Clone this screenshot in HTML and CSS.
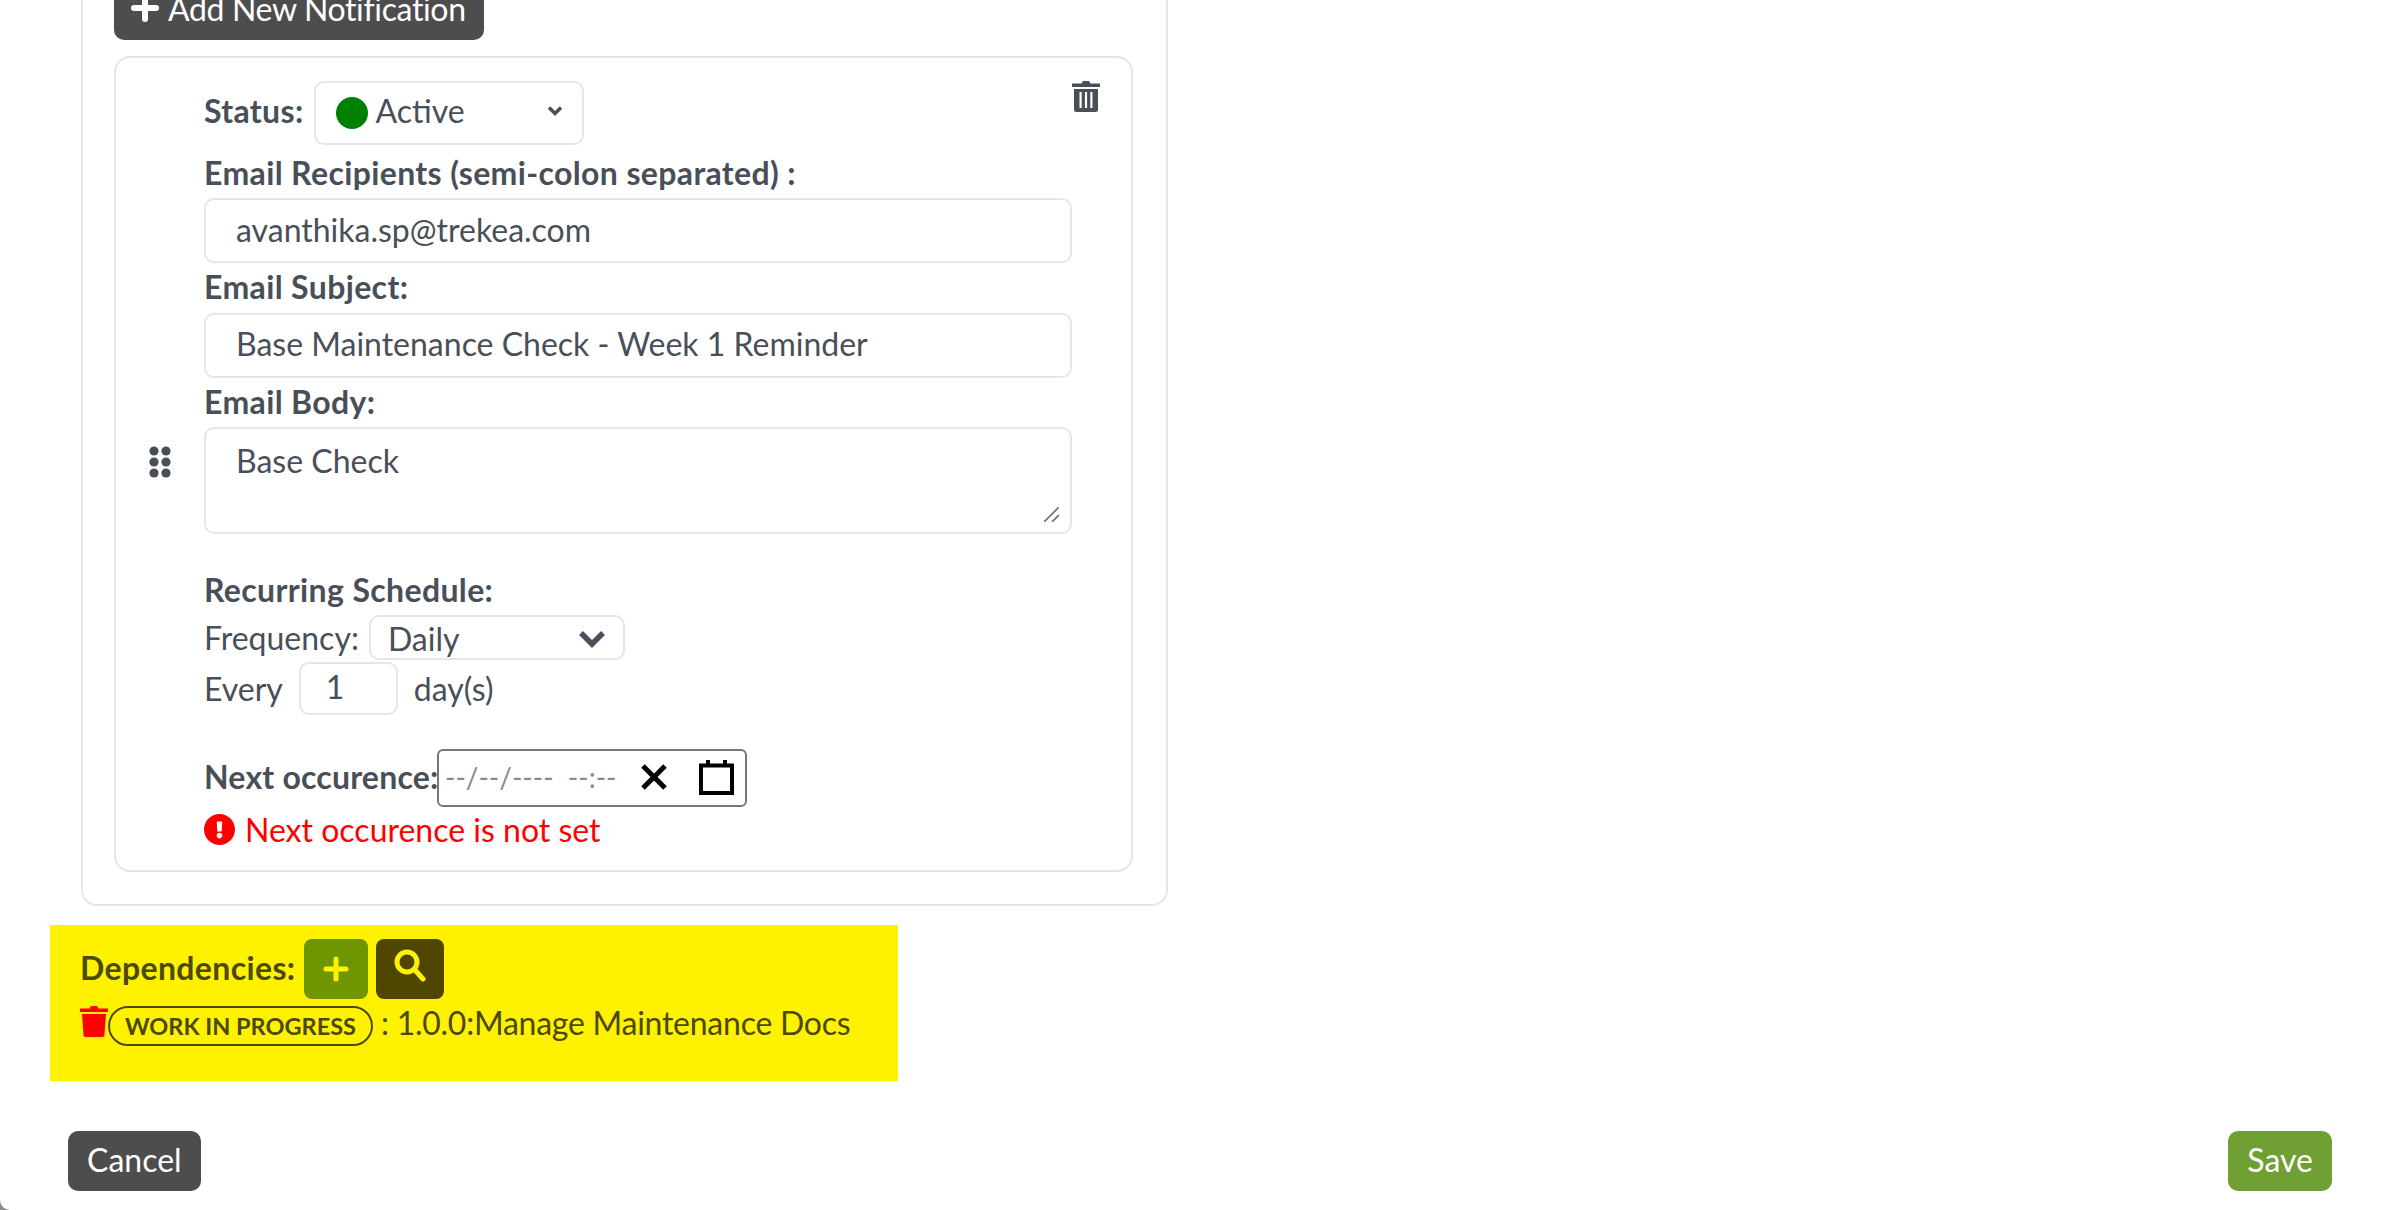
FILE: index.html
```html
<!DOCTYPE html>
<html lang="en">
<head>
<meta charset="utf-8">
<title>Edit</title>
<link rel="stylesheet" href="styles.css">
</head>
<body>
<div class="modal">
  <main class="scroll">
    <section class="outer">
      <button class="btn btn-dark btn-add" type="button">
        <svg class="ic-plus" viewBox="0 0 28 28"><path d="M14 3v22M3 14h22"/></svg>
        <span class="add-text">Add New Notification</span>
      </button>
      <article class="notif">
        <svg class="grip" viewBox="0 0 22 32"><circle cx="5" cy="5" r="4.600"/><circle cx="17" cy="5" r="4.600"/><circle cx="5" cy="16" r="4.600"/><circle cx="17" cy="16" r="4.600"/><circle cx="5" cy="27" r="4.600"/><circle cx="17" cy="27" r="4.600"/></svg>
        <div class="fields">
          <div class="status-row">
            <label class="lbl lift">Status:</label>
            <div class="select select-status">
              <span class="dot"></span><span class="sel-text lift">Active</span>
              <svg class="chev-small" viewBox="0 0 16 12"><path d="M2 2.500l6 6 6-6"/></svg>
            </div>
          </div>
          <label class="lbl lbl-block">Email Recipients (semi-colon separated) :</label>
          <input class="input" type="text" value="avanthika.sp@trekea.com">
          <label class="lbl lbl-block">Email Subject:</label>
          <input class="input" type="text" value="Base Maintenance Check - Week 1 Reminder">
          <label class="lbl lbl-block">Email Body:</label>
          <div class="area-wrap">
            <textarea class="input area">Base Check</textarea>
            <svg class="grabber" viewBox="0 0 15 15"><path d="M15 0L0 15M15 8l-7 7"/></svg>
          </div>
          <div class="lbl recurring">Recurring Schedule:</div>
          <div class="freq-row">
            <span>Frequency:</span>
            <div class="select select-freq">
              <span class="sel-text">Daily</span>
              <svg class="chev-big" viewBox="0 0 28 18"><path d="M3 3l11 11L25 3"/></svg>
            </div>
          </div>
          <div class="every-row">
            <span>Every</span>
            <input class="input input-num" type="text" value="1">
            <span>day(s)</span>
          </div>
          <div class="next-row">
            <label class="lbl next-lbl">Next occurence:</label>
            <div class="datebox">
              <span class="date-ph">--/--/----&nbsp; --:--</span>
              <svg class="ic-x" viewBox="0 0 26 26"><path d="M2 2l22 22M24 2L2 24"/></svg>
              <svg class="ic-cal" viewBox="0 0 35 36"><path d="M2 6.500h31v27.500H2z"/><path d="M9 1v7M26 1v7"/></svg>
            </div>
          </div>
          <div class="error">
            <svg class="ic-err" viewBox="8 8 496 496"><path d="M504 256c0 136.997-111.043 248-248 248S8 392.997 8 256C8 119.083 119.043 8 256 8s248 111.083 248 248zm-248 50c-25.405 0-46 20.595-46 46s20.595 46 46 46 46-20.595 46-46-20.595-46-46-46zm-43.673-165.346l7.418 136c.347 6.364 5.609 11.346 11.982 11.346h48.546c6.373 0 11.635-4.982 11.982-11.346l7.418-136c.375-6.874-5.098-12.654-11.982-12.654h-63.383c-6.884 0-12.356 5.780-11.981 12.654z"/></svg>
            <span>Next occurence is not set</span>
          </div>
        </div>
        <svg class="ic-trash" viewBox="0 0 28 32"><path d="M0 3.500h9.500L11 1h6l1.500 2.500H28V7H0z"/><path fill-rule="evenodd" d="M2 9h24v20.500a2.500 2.500 0 0 1-2.500 2.500h-19A2.500 2.500 0 0 1 2 29.500zM7.500 12v16h2.200V12zm5.400 0v16h2.200V12zm5.400 0v16h2.200V12z"/></svg>
      </article>
    </section>

    <section class="deps">
      <div class="deps-head">
        <span class="lbl deps-lbl">Dependencies:</span>
        <button class="mini mini-add" type="button"><svg viewBox="0 0 28 28"><path d="M14 4v20M4 14h20"/></svg></button>
        <button class="mini mini-search" type="button"><svg viewBox="0 0 32 34"><circle cx="13" cy="13" r="10"/><path d="M20.500 20.500L29 30"/></svg></button>
      </div>
      <div class="deps-item">
        <svg class="ic-trash-red" viewBox="0 0 28 32"><path d="M0 3.500h9.500L11 1h6l1.500 2.500H28V7H0z"/><path d="M2 9h24l-1.500 20.500a2.500 2.500 0 0 1-2.500 2.500H6a2.500 2.500 0 0 1-2.500-2.500z"/></svg>
        <span class="pill">WORK IN PROGRESS</span>
        <span class="dep-name">: 1.0.0:Manage Maintenance Docs</span>
      </div>
    </section>

    <footer class="actions">
      <button class="btn btn-dark" type="button">Cancel</button>
      <button class="btn btn-green" type="button">Save</button>
    </footer>
  </main>
</div>
</body>
</html>
```
FILE: styles.css
```css
* { box-sizing: border-box; }
html, body { margin: 0; height: 100%; overflow: hidden; }
html, body { background: #8c8c8c; }
body { font-family: "Lato", "Liberation Sans", sans-serif; font-size: 32px; color: #484f58; }

.modal { height: 1210px; overflow: hidden; background: #fff; border-bottom-left-radius: 10px; }
.scroll { margin-top: -20px; padding: 0 62px 0 50px; }

.outer {
  width: 1087px;
  margin-left: 31px;
  padding: 0 33px 32px 31px;
  border: 2px solid #e6e6e6;
  border-top: 0;
  border-radius: 0 0 16px 16px;
}

.btn {
  height: 60px;
  border: 0;
  border-radius: 10px;
  padding: 0 19px 2px;
  font: inherit;
  color: #fff;
}
.btn-dark { background: #4d4d4d; }
.btn-green { background: #709f34; }
.btn-add { display: flex; align-items: center; gap: 9px; width: 370px; padding-left: 17px; padding-bottom: 4px; }
.add-text { white-space: nowrap; letter-spacing: -.35px; }
.ic-plus { width: 28px; height: 28px; fill: none; stroke: #fff; stroke-width: 6; stroke-linecap: round; flex: none; }

.notif {
  position: relative;
  margin-top: 16px;
  padding: 23px 30px 21px 88px;
  border: 2px solid #e6e6e6;
  border-radius: 16px;
}
.fields { width: 868px; }
.grip { position: absolute; left: 33px; top: 388px; width: 22px; height: 32px; fill: #484f58; }
.ic-trash { position: absolute; left: 956px; top: 22px; width: 28px; height: 32px; fill: #484f58; }

.lbl { font-weight: 700; letter-spacing: .36px; }
.lift { padding-bottom: 5px; }
.lbl-block { display: block; height: 49.500px; padding-top: 7px; line-height: 34px; }

.status-row { display: flex; align-items: center; gap: 10px; margin-bottom: 3.500px; }
.select {
  display: flex;
  align-items: center;
  background: #fff;
  border: 2px solid #e6e6e6;
  border-radius: 10px;
}
.select-status { width: 270px; height: 64px; padding-left: 20px; position: relative; }
.dot { width: 32px; height: 32px; border-radius: 50%; background: #008000; margin-right: 8px; }
.chev-small { position: absolute; right: 19px; top: 22px; width: 16px; height: 12px; fill: none; stroke: #484f58; stroke-width: 3.500; }

.input {
  display: block;
  width: 100%;
  height: 65px;
  padding: 0 30px 3px;
  border: 2px solid #e6e6e6;
  border-radius: 10px;
  background: #fff;
  font: inherit;
  color: inherit;
  outline: 0;
}
.area-wrap { position: relative; }
.area { height: 107px; padding-top: 12px; resize: none; }
.grabber { position: absolute; right: 13px; bottom: 12px; width: 15px; height: 15px; fill: none; stroke: #777; stroke-width: 1.800; }

.recurring { margin-top: 39px; line-height: 34px; }
.freq-row { display: flex; align-items: center; gap: 10px; height: 45px; margin-top: 7.500px; }
.select-freq { width: 256px; height: 45px; padding: 2px 17px 0; justify-content: space-between; }
.chev-big { width: 28px; height: 18px; fill: none; stroke: #484f58; stroke-width: 5.500; margin-top: 2px; }

.every-row { display: flex; align-items: center; gap: 16px; height: 53px; margin-top: 2px; }
.input-num { width: 99px; height: 53px; padding: 0 25px 3px; }

.next-row { display: flex; align-items: center; margin-top: 34px; height: 58px; }
.next-lbl { width: 233px; padding-bottom: 2px; letter-spacing: .2px; white-space: nowrap; }
.datebox {
  display: flex;
  align-items: center;
  width: 310px;
  height: 58px;
  border: 2px solid #787878;
  border-radius: 6px;
  padding: 0 0 2px 6px;
}
.date-ph { width: 196px; font-size: 28px; color: #858a91; white-space: nowrap; }
.ic-x { width: 26px; height: 26px; fill: none; stroke: #000; stroke-width: 5; }
.ic-cal { width: 35px; height: 36px; margin-left: 32px; fill: none; stroke: #000; stroke-width: 4; }

.error { display: flex; align-items: center; gap: 10px; color: #f00; margin-top: 3px; }
.ic-err { width: 31px; height: 31px; fill: #f00; }

.deps {
  width: 848px;
  height: 156px;
  margin-top: 19px;
  padding: 14px 30px 0;
  background: #fff200;
  color: #4d4800;
  white-space: nowrap;
}
.deps-head { display: flex; align-items: center; gap: 8px; }
.deps-lbl { margin-right: 1px; padding-bottom: 3px; }
.mini {
  display: flex;
  align-items: center;
  justify-content: center;
  height: 60px;
  border: 0;
  border-radius: 8px;
  padding: 0;
}
.mini-add { width: 64px; background: #6f9500; }
.mini-search { width: 68px; background: #4f4700; }
.mini svg { fill: none; stroke: #fff200; stroke-linecap: round; }
.mini-add svg { width: 28px; height: 28px; stroke-width: 5; }
.mini-search svg { width: 32px; height: 34px; stroke-width: 5; margin-bottom: 6px; }

.deps-item { display: flex; align-items: flex-start; margin-top: 6px; }
.ic-trash-red { width: 28px; height: 32px; fill: #f00; flex: none; }
.pill {
  display: inline-flex;
  align-items: center;
  height: 40px;
  margin-top: 1px;
  padding: 0 15px;
  border: 2px solid #4d4800;
  border-radius: 20px;
  font-size: 23.500px;
  font-weight: 700;
}
.dep-name { margin-left: 8px; line-height: 36px; letter-spacing: -.25px; }

.actions { display: flex; justify-content: space-between; margin-top: 50px; margin-left: 18px; }
```
